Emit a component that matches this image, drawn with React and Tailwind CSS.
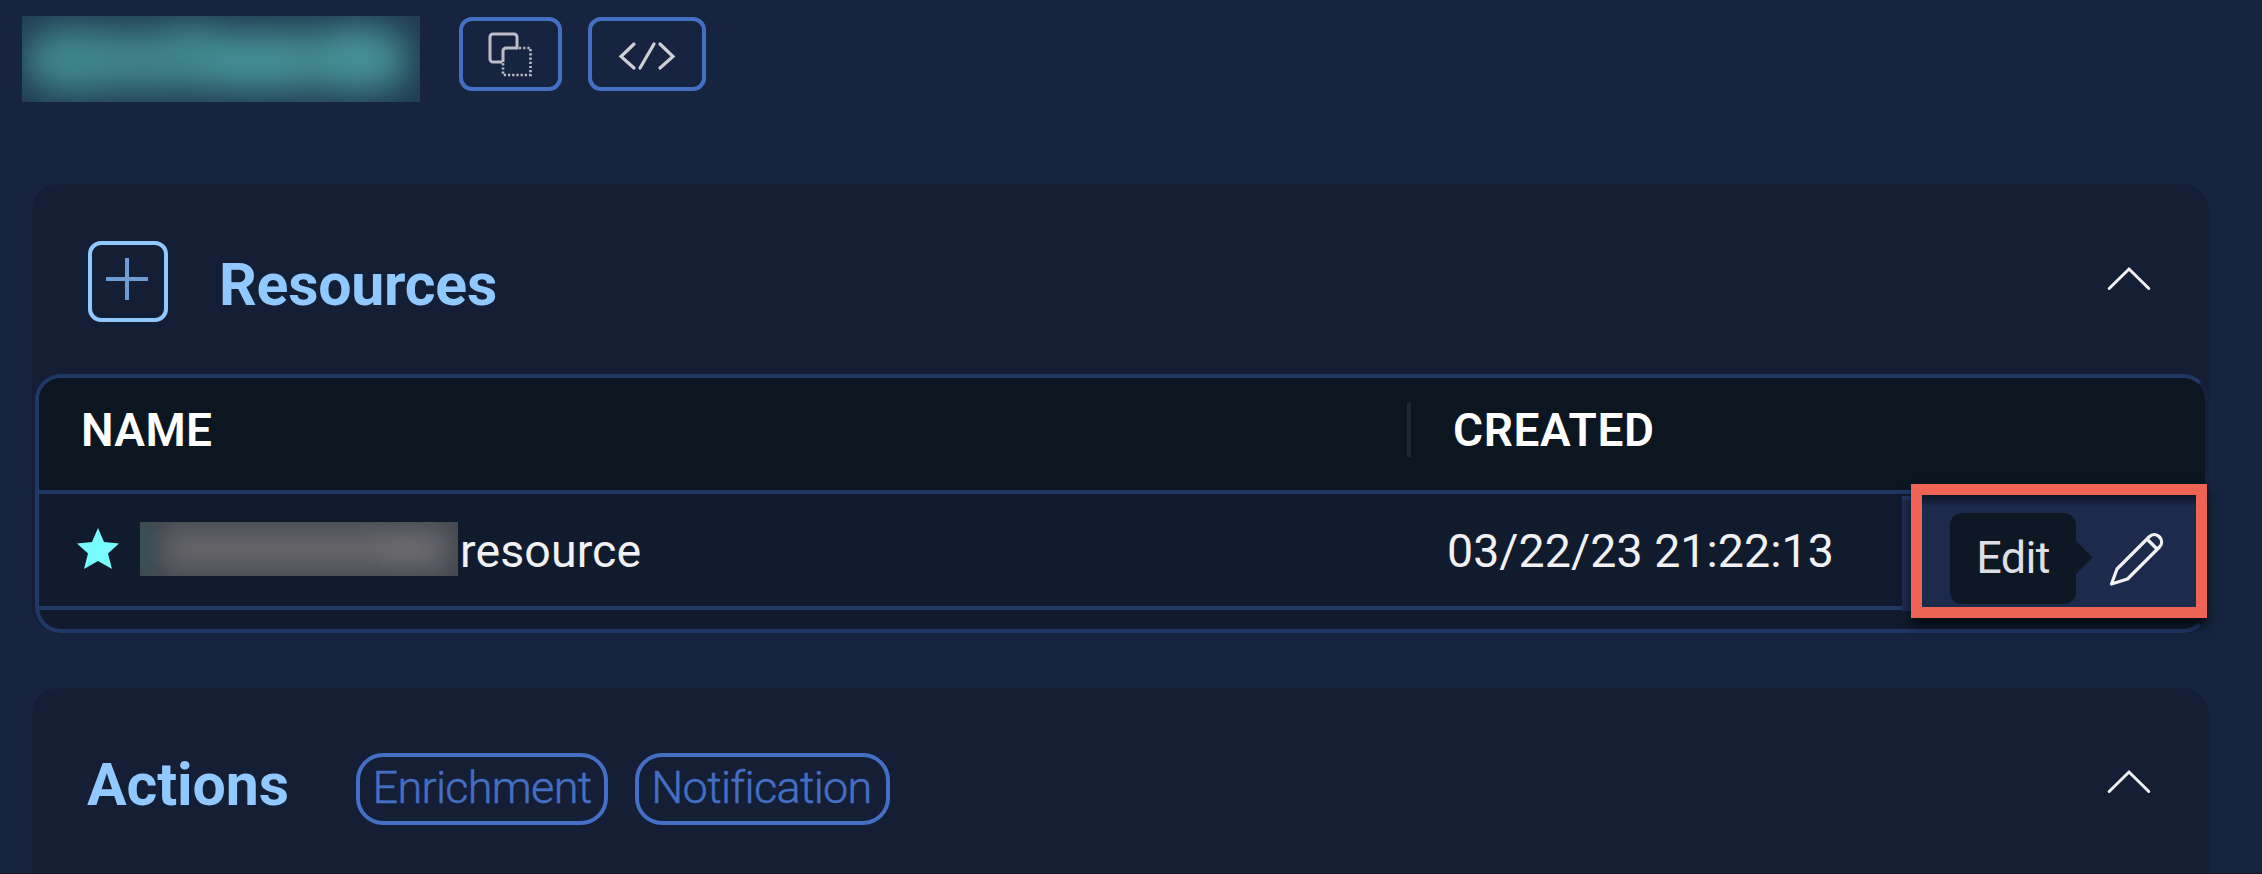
function Chevron() {
  return (
    <svg className="h-[26px] w-[48px]" viewBox="0 0 48 26" fill="none" stroke="#f1f1f3" strokeWidth="3" strokeLinecap="round">
      <path d="M4.200 22.500 L24 3 L43.800 22.500" />
    </svg>
  );
}

function Header() {
  return (
    <header className="flex h-[184px] items-start pl-[22px] pt-4">
      <div className="h-[86px] w-[398px] overflow-hidden bg-[#274a5c]">
        <svg className="h-full w-full" viewBox="0 0 398 86">
          <defs>
            <filter id="glow" x="-30%" y="-90%" width="160%" height="280%"><feGaussianBlur stdDeviation="17" /></filter>
            <filter id="haze" x="-30%" y="-90%" width="160%" height="280%"><feGaussianBlur stdDeviation="12" /></filter>
          </defs>
          <rect width="398" height="86" fill="#1f3a4f" />
          <g filter="url(#glow)">
            <rect x="4" y="14" width="382" height="60" rx="20" fill="#408388" />
            <ellipse cx="55" cy="44" rx="46" ry="34" fill="#41868b" />
            <ellipse cx="170" cy="34" rx="40" ry="28" fill="#41868b" />
            <ellipse cx="235" cy="50" rx="50" ry="24" fill="#469297" />
            <ellipse cx="335" cy="42" rx="36" ry="34" fill="#469297" />
          </g>
        </svg>
      </div>
      <button className="ml-[39px] mt-px flex h-[74px] w-[103px] items-center justify-center rounded-[13px] border-4 border-[#446fc4]">
        <svg className="mt-0.5 h-[46px] w-[46px]" viewBox="0 0 46 46" fill="none" stroke="#bcbdc6" strokeWidth="3">
          <path d="M14.500 30 H5 a3 3 0 0 1 -3 -3 V5 a3 3 0 0 1 3 -3 H26 a3 3 0 0 1 3 3 V16 H18 a3 3 0 0 0 -3 3 V30" />
          <path d="M31 16 H42.500 V43 H15 V31" strokeDasharray="2.2 2" strokeWidth="2.6" />
        </svg>
      </button>
      <button className="ml-[26px] mt-px flex h-[74px] w-[118px] items-center justify-center rounded-[13px] border-4 border-[#446fc4]">
        <svg className="mt-1 h-[30px] w-[58px]" viewBox="0 0 58 30" fill="none" stroke="#cfd0d5" strokeWidth="3.2" strokeLinecap="round">
          <path d="M16 3 L3 15.500 L16 27 M36 3 L22 27 M42 3 L55 15.500 L42 27" />
        </svg>
      </button>
    </header>
  );
}

function Resources() {
  return (
    <section className="h-[449px] w-[2177px] rounded-[27px] bg-[#141e35] pl-[3px]">
      <div className="flex h-[190px] items-start pl-[53px]">
        <button className="mt-[57px] flex h-[81px] w-[80px] justify-center rounded-[13px] border-4 border-[#91c8fd]">
          <svg className="-ml-[3px] mt-[13px] h-[42px] w-[42px]" viewBox="0 0 42 42" stroke="#6d9dd2" strokeWidth="4">
            <path d="M0 21 H42 M21 0 V42" />
          </svg>
        </button>
        <h2 className="ml-[51px] mt-[65px] text-[59px] font-bold leading-[72px] tracking-[-0.25px] text-[#91c8fd]">Resources</h2>
        <div className="ml-auto mr-[56px] mt-[82px]"><Chevron /></div>
      </div>
      <div className="relative h-[259px] w-[2174px] rounded-[26px] border-4 border-[#203864] border-r-[#15203a] bg-[#101b2d]">
        <div className="flex h-[116px] rounded-t-[22px] border-b-4 border-[#203864] bg-[#0c1620]">
          <div className="flex h-[112px] w-[1368px] items-start pl-[42px] pt-[20px] text-[46px] font-semibold leading-[64px] text-white">
            <span className="tracking-[0.4px]">NAME</span>
          </div>
          <div className="mt-[25px] h-[54px] w-1 bg-[#20262f]" />
          <div className="pl-[42px] pt-[20px] text-[46px] font-semibold leading-[64px] text-white">
            <span className="tracking-[0.6px]">CREATED</span>
          </div>
        </div>
        <div className="flex h-[116px] border-b-4 border-[#203864] text-[46.5px] leading-[64px] text-[#f1f1f4]">
          <div className="flex w-[1408px] items-start pl-[38px]">
            <svg className="mt-[34px] h-[41px] w-[42px]" viewBox="0 0 42 41" fill="#79fcfc">
              <path d="M21 0 L27 14 L42 15.500 L31 25.500 L35 41 L21 33 L7 41 L11 25.500 L0 15.500 L15 14 Z" />
            </svg>
            <div className="ml-[21px] mt-[28px] h-[54px] w-[318px] overflow-hidden">
              <svg className="h-full w-full" viewBox="0 0 318 54">
                <rect width="318" height="54" fill="#42464f" />
                <rect x="-10" width="24" height="54" fill="#2f5358" filter="url(#haze)" />
                <g filter="url(#haze)">
                  <rect x="24" y="5" width="284" height="44" fill="#636367" />
                  <ellipse cx="265" cy="25" rx="30" ry="18" fill="#6a6a6e" />
                </g>
              </svg>
            </div>
            <span className="ml-[2px] mt-[25px] tracking-[0.1px]">resource</span>
          </div>
          <span className="mt-[25px] whitespace-nowrap tracking-[0.05px]">03/22/23 21:22:13</span>
        </div>
        <div className="absolute left-[1863px] top-[118px] h-[115px] w-[304px] border-t-4 border-[#203864] bg-[#1c2c4d]" />
        <div className="absolute left-[1872px] top-[106px] flex h-[134px] w-[296px] items-start border-[11px] border-[#ed6454] bg-[#1c2b4b] shadow-[0_8px_10px_rgba(0,0,0,0.6)]">
          <div className="absolute inset-x-0 top-0 h-3 bg-linear-to-b from-[#0c1528] to-transparent" />
          <div className="relative ml-[28px] mt-[18px] h-[91px] w-[126px] rounded-xl bg-[#0e1724] text-center text-[45px] leading-[90px] tracking-[-0.7px] text-[#dedfe5]">
            Edit
            <svg className="absolute left-[125px] top-[27px] h-[35px] w-[18px]" viewBox="0 0 18 35" fill="#0e1724"><path d="M0 0 L17.500 17.500 L0 35 Z" /></svg>
          </div>
          <svg className="ml-[33px] mt-[36px] h-[56px] w-[56px]" viewBox="0 0 56 56" fill="none" stroke="#f2f2f3" strokeWidth="3.2" strokeLinejoin="round">
            <path d="M2.500 53 L8 38 L40 6 C47 -1 57 9 50.500 16 L18.500 48 Z M38 8 L48.500 18.500" />
          </svg>
        </div>
      </div>
    </section>
  );
}

function Actions() {
  return (
    <section className="mt-[55px] flex h-[186px] w-[2177px] items-start rounded-t-[27px] bg-[#141e35] pl-[55px]">
      <h2 className="mt-[61px] w-[269px] text-[59px] font-bold leading-[72px] tracking-[-0.1px] text-[#91c8fd]">Actions</h2>
      <div className="mt-[65px] flex gap-[27px] text-[45px] font-light leading-[62px] tracking-[-0.7px] text-[#446fc4] [-webkit-text-stroke:0.5px_#446fc4]">
        <span className="flex h-[72px] w-[252px] justify-center rounded-[27px] border-4 border-[#446fc4]">Enrichment</span>
        <span className="flex h-[72px] w-[255px] justify-center rounded-[27px] border-4 border-[#446fc4] pr-0.5">Notification</span>
      </div>
      <div className="ml-auto mr-[56px] mt-[81px]"><Chevron /></div>
    </section>
  );
}

export default function App() {
  return (
    <div className="h-[874px] w-[2262px] overflow-hidden border-b border-[#10162c] bg-[#16243f] font-[Roboto,sans-serif]">
      <Header />
      <main className="pl-8">
        <Resources />
        <Actions />
      </main>
    </div>
  );
}
